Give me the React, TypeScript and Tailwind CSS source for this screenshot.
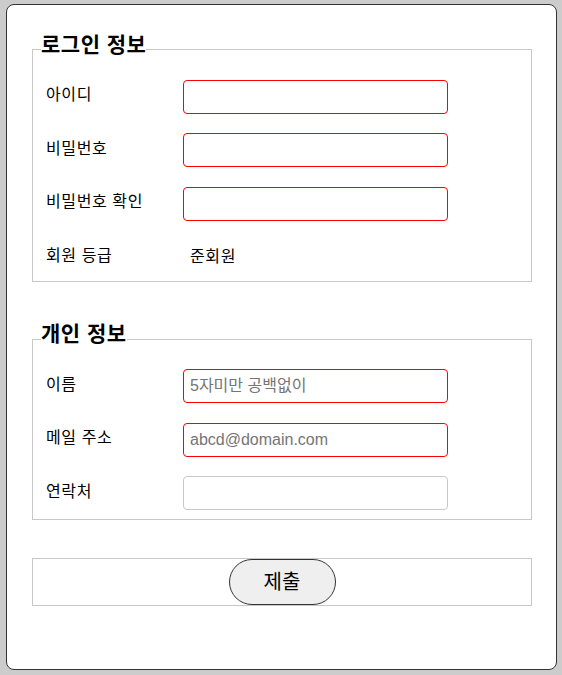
import React from 'react';

const font = { fontFamily: '"Liberation Sans", "Noto Sans CJK KR", sans-serif' };

const Row = ({ label, children }: { label: string; children: React.ReactNode }) => (
  <div className="flex items-center h-[34px] mb-[19.5px] pl-[5px]">
    <div className="w-[137px] text-[16px] leading-[20px] tracking-[0.6px] text-black -mt-[3px]">{label}</div>
    {children}
  </div>
);

const Field = ({ placeholder, required = true }: { placeholder?: string; required?: boolean }) => (
  <input
    type="text"
    placeholder={placeholder}
    className={`w-[265px] h-[34px] rounded-[4px] border px-[6px] text-[16px] bg-white outline-none placeholder:text-[#757575] ${required ? 'border-[#ff0000]' : 'border-[#c8c8c8]'}`}
  />
);

const Legend = ({ children }: { children: React.ReactNode }) => (
  <legend className="text-[21px] font-bold leading-[21px] tracking-[0.5px] pb-[11px] text-black">{children}</legend>
);

export default function App() {
  return (
    <div className="min-h-screen bg-[#cccccc] pt-[4px] pl-[6px] pr-[5px] pb-[5px]" style={font}>
      <div className="w-[551px] h-[666px] bg-white border border-[#333333] rounded-[8px] pt-[28.5px] pl-[25px] pr-[24px]">
        <form>
          <fieldset className="border border-[#c8c8c8] pl-[8px] pr-[8px] pt-[14px] pb-[0px] h-[248px]">
            <Legend>로그인 정보</Legend>
            <Row label="아이디"><Field /></Row>
            <Row label="비밀번호"><Field /></Row>
            <Row label="비밀번호 확인"><Field /></Row>
            <Row label="회원 등급">
              <span className="pl-[7px] text-[16px] leading-[20px] tracking-[0.6px]">준회원</span>
            </Row>
          </fieldset>

          <fieldset className="border border-[#c8c8c8] pl-[8px] pr-[8px] pt-[14px] mt-[41.5px] h-[197px]">
            <Legend>개인 정보</Legend>
            <Row label="이름"><Field placeholder="5자미만 공백없이" /></Row>
            <Row label="메일 주소"><Field placeholder="abcd@domain.com" /></Row>
            <Row label="연락처"><Field required={false} /></Row>
          </fieldset>

          <fieldset className="border border-[#c8c8c8] mt-[38px] h-[48px] flex justify-center">
            <button
              type="button"
              className="w-[107px] h-[46px] rounded-full border border-[#333333] bg-[#efefef] text-[20px] text-black"
            >
              제출
            </button>
          </fieldset>
        </form>
      </div>
    </div>
  );
}
